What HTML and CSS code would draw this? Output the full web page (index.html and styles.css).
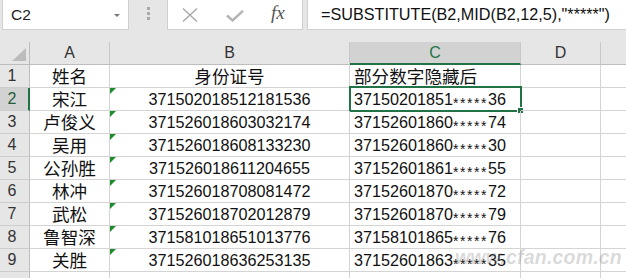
FILE: index.html
```html
<!DOCTYPE html>
<html>
<head>
<meta charset="utf-8">
<link rel="stylesheet" href="styles.css">
</head>
<body>
<div class="app">
  <div class="fbar">
    <div class="namebox"><span class="nb-text">C2</span><span class="dd"></span></div>
    <div class="grip"><i></i><i></i><i></i></div>
    <div class="btns">
      <svg class="ic-x" width="16" height="14" viewBox="0 0 16 14"><path d="M1 0.5 L15 13.5 M15 0.5 L1 13.5" stroke="#a8a8a8" stroke-width="1.4" fill="none"/></svg>
      <svg class="ic-ok" width="18" height="12" viewBox="0 0 18 12"><path d="M1 5.5 L6.5 10.5 L17 0.8" stroke="#b4b4b4" stroke-width="2.4" fill="none"/></svg>
      <span class="fx">fx</span>
    </div>
    <div class="formula">=SUBSTITUTE(B2,MID(B2,12,5),"*****")</div>
  </div>
  <div class="sheet">
    <div class="hd corner"><span class="tri-corner"></span></div>
    <div class="hd colh">A</div>
    <div class="hd colh">B</div>
    <div class="hd colh sel">C</div>
    <div class="hd colh">D</div>
    <div class="hd colh last"></div>

    <div class="rh">1</div><div class="c a cjk">姓名</div><div class="c b cjk">身份证号</div><div class="c cc cjk">部分数字隐藏后</div><div class="c"></div><div class="c last"></div>

    <div class="rh sel">2</div><div class="c a cjk">宋江</div><div class="c b tri">371502018512181536</div><div class="c cc active">37150201851<span class="st">*****</span>36<span class="selbox"></span><span class="handle"></span></div><div class="c"></div><div class="c last"></div>

    <div class="rh">3</div><div class="c a cjk">卢俊义</div><div class="c b tri">371526018603032174</div><div class="c cc">37152601860<span class="st">*****</span>74</div><div class="c"></div><div class="c last"></div>

    <div class="rh">4</div><div class="c a cjk">吴用</div><div class="c b tri">371526018608133230</div><div class="c cc">37152601860<span class="st">*****</span>30</div><div class="c"></div><div class="c last"></div>

    <div class="rh">5</div><div class="c a cjk">公孙胜</div><div class="c b tri">371526018611204655</div><div class="c cc">37152601861<span class="st">*****</span>55</div><div class="c"></div><div class="c last"></div>

    <div class="rh">6</div><div class="c a cjk">林冲</div><div class="c b tri">371526018708081472</div><div class="c cc">37152601870<span class="st">*****</span>72</div><div class="c"></div><div class="c last"></div>

    <div class="rh">7</div><div class="c a cjk">武松</div><div class="c b tri">371526018702012879</div><div class="c cc">37152601870<span class="st">*****</span>79</div><div class="c"></div><div class="c last"></div>

    <div class="rh">8</div><div class="c a cjk">鲁智深</div><div class="c b tri">371581018651013776</div><div class="c cc">37158101865<span class="st">*****</span>76</div><div class="c"></div><div class="c last"></div>

    <div class="rh">9</div><div class="c a cjk">关胜</div><div class="c b tri">371526018636253135</div><div class="c cc">37152601863<span class="st">*****</span>35</div><div class="c"></div><div class="c last"></div>

    <div class="rh"></div><div class="c"></div><div class="c"></div><div class="c"></div><div class="c"></div><div class="c last"></div>
  </div>
  <div class="wm">www.cfan.com.cn</div>
</div>
</body>
</html>
```

FILE: styles.css
```css
* { box-sizing: border-box; }
html, body { margin: 0; padding: 0; }
body {
  background: #e6e6e6;
  font-family: "Liberation Sans", Arial, sans-serif;
  overflow: hidden;
  width: 626px;
  height: 278px;
}
.app { position: relative; width: 626px; height: 278px; overflow: hidden; }

.fbar {
  display: flex;
  height: 30px;
  margin-bottom: 12px;
}
.namebox {
  margin-left: 2px;
  width: 127px;
  height: 30px;
  background: #fff;
  border: 1px solid #d0d0d0;
  border-top: none;
  display: flex;
  align-items: center;
  justify-content: space-between;
  padding: 0 8px 0 8px;
}
.nb-text { font-size: 15.5px; color: #222; }
.dd {
  width: 0; height: 0;
  border-left: 3.5px solid transparent;
  border-right: 3.5px solid transparent;
  border-top: 3.5px solid #777;
  margin-top: 1px;
}
.grip {
  width: 38px;
  display: flex;
  flex-direction: column;
  align-items: center;
  padding-top: 7px;
  gap: 2.5px;
}
.grip i {
  display: block;
  width: 3px; height: 2.5px;
  background: #a8a8a8;
}
.btns {
  width: 136px;
  height: 30px;
  background: #fff;
  border: 1px solid #d0d0d0;
  border-top: none;
  display: flex;
  align-items: center;
  padding-left: 14px;
}
.ic-x { margin-top: 1px; }
.ic-ok { margin-left: 28px; margin-top: 3px; }
.fx {
  margin-left: 27px;
  font-family: "Liberation Serif", serif;
  font-style: italic;
  font-size: 19px;
  color: #555;
  margin-top: -3px;
}
.formula {
  margin-left: 4px;
  flex: 1;
  height: 30px;
  background: #fff;
  border-left: 1px solid #d0d0d0;
  border-bottom: 1px solid #d0d0d0;
  padding-left: 13px;
  font-size: 16.2px;
  line-height: 28px;
  color: #111;
  white-space: nowrap;
}

.sheet {
  display: grid;
  grid-template-columns: 30px 80px 240px 171px 80px 1fr;
  grid-auto-rows: 23px;
  background: #fff;
  height: 236px;
  overflow: hidden;
}
.hd {
  background: #e6e6e6;
  border-right: 1px solid #c8c8c8;
  border-bottom: 1px solid #bdbdbd;
  font-size: 16px;
  color: #333;
  display: flex;
  align-items: center;
  justify-content: center;
  line-height: 20px;
}
.hd.sel {
  background: #d2d2d2;
  border-bottom: 2px solid #217346;
  color: #217346;
  padding-top: 1px;
}
.hd.last { border-right: none; }
.corner { position: relative; border-right-color: #bdbdbd; }
.tri-corner {
  position: absolute;
  right: 3px;
  bottom: 3px;
  width: 0; height: 0;
  border-left: 14px solid transparent;
  border-bottom: 13px solid #bcbcbc;
}
.rh {
  background: #e6e6e6;
  border-right: 1px solid #bdbdbd;
  border-bottom: 1px solid #cdcdcd;
  font-size: 16px;
  color: #333;
  text-align: center;
  padding-right: 5px;
  line-height: 22px;
}
.rh.sel {
  background: #d2d2d2;
  border-right: 2px solid #217346;
  color: #1f5e3b;
  padding-right: 4px;
}
.c {
  border-right: 1px solid #d4d4d4;
  border-bottom: 1px solid #d4d4d4;
  font-size: 16.2px;
  line-height: 22px;
  color: #111;
  white-space: nowrap;
  position: relative;
}
.c.last { border-right: none; }
.cjk {
  font-family: "Noto Sans CJK SC", sans-serif;
  font-size: 17.6px;
  line-height: 21px;
}
.a { text-align: center; }
.b { text-align: center; }
.cc { padding-left: 4px; }
.tri::before {
  content: "";
  position: absolute;
  left: 0; top: 0;
  width: 0; height: 0;
  border-top: 6px solid #1e8c2e;
  border-right: 6px solid transparent;
}
.st {
  font-size: 14px;
  letter-spacing: 1.55px;
  vertical-align: -3px;
}
.selbox {
  position: absolute;
  left: -1px;
  top: -2px;
  width: 173px;
  height: 26px;
  border: 2px solid #217346;
}
.handle {
  position: absolute;
  left: 167px;
  top: 19px;
  width: 7px;
  height: 7px;
  background: #217346;
  border: 1px solid #fff;
}
.wm {
  position: absolute;
  left: 455px;
  top: 246px;
  font-family: "Liberation Sans", sans-serif;
  font-weight: bold;
  font-style: italic;
  font-size: 19.5px;
  color: rgba(120, 120, 120, 0.28);
  letter-spacing: 0.2px;
  white-space: nowrap;
}
```
